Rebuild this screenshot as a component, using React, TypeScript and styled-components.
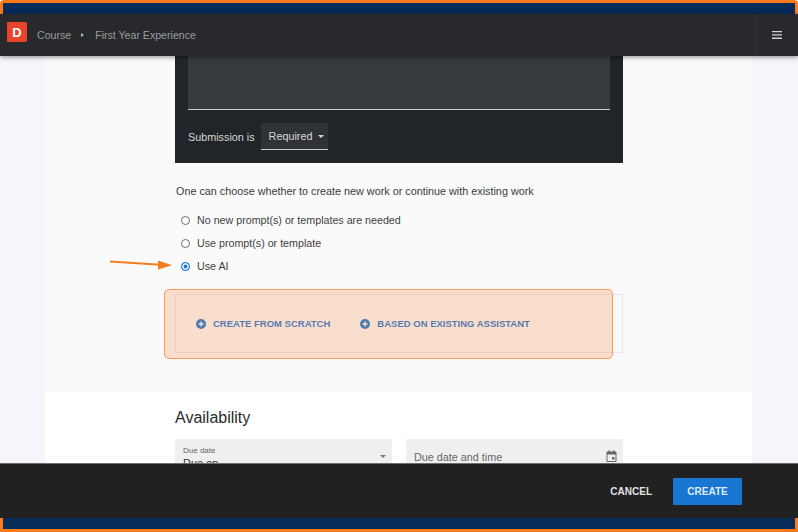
import React from "react";
import styled, { createGlobalStyle } from "styled-components";

const GlobalStyle = createGlobalStyle`
  html, body {
    margin: 0;
    padding: 0;
    height: 100%;
    overflow: hidden;
    background: #fff;
  }
  * { box-sizing: border-box; }
  body {
    font-family: "Liberation Sans", Arial, sans-serif;
  }
`;

const Page = styled.div`
  position: relative;
  width: 798px;
  height: 532px;
  display: flex;
  flex-direction: column;
  overflow: hidden;
`;

const TopBand = styled.div`
  height: 14px;
  flex: none;
  background: #072c5a;
  border: solid #ff7a1a;
  border-width: 3px 3px 0 3px;
  border-radius: 4px 4px 0 0;
`;

const BottomBand = styled.div`
  height: 14px;
  flex: none;
  background: #072c5a;
  border: solid #ff7a1a;
  border-width: 0 3px 3px 3px;
`;

const Header = styled.header`
  position: relative;
  z-index: 2;
  height: 42px;
  flex: none;
  display: flex;
  align-items: center;
  background: #27292c;
  box-shadow: 0 1px 5px rgba(0, 0, 0, 0.45);
  padding-left: 7px;
`;

const Logo = styled.div`
  width: 20px;
  height: 20px;
  margin-top: -6px;
  background: #e8442a;
  border-radius: 1px;
  display: flex;
  align-items: center;
  justify-content: center;
  color: #fff;
  font-size: 13px;
  font-weight: 700;
`;

const Crumb = styled.span`
  color: #9b9c9e;
  font-size: 10.6px;
  line-height: 14px;
`;

const CrumbCaret = styled.span`
  width: 0;
  height: 0;
  margin: 0 11px 0 10px;
  border-style: solid;
  border-width: 2.5px 0 2.5px 3px;
  border-color: transparent transparent transparent #b5b6b8;
`;

const Crumbs = styled.nav`
  display: flex;
  align-items: center;
  margin-left: 10px;
`;

const MenuCell = styled.div`
  margin-left: auto;
  width: 43px;
  height: 40px;
  border-left: 1px solid #313336;
  display: flex;
  align-items: center;
  justify-content: center;
  color: #d4d4d4;
`;

const Main = styled.main`
  flex: 1;
  min-height: 0;
  overflow: hidden;
  padding: 0 46px 0 45px;
  background: #f4f6fb;
`;

const Sheet = styled.div`
  background: #fff;
`;

const UpperSection = styled.section`
  height: 336px;
  padding-left: 130px;
  background: #fafafa;
`;

const Column = styled.div`
  width: 448px;
`;

const DarkPanel = styled.div`
  height: 107px;
  background: #212428;
  padding: 0 13px;
  color: #d6d7d8;
  font-size: 10.8px;
`;

const DarkTextArea = styled.div`
  height: 54px;
  background: #373a3c;
  border-bottom: 1px solid #c9caca;
`;

const SubmissionRow = styled.div`
  margin-top: 13px;
  display: flex;
  align-items: center;
  gap: 6px;
`;

const DarkSelect = styled.div`
  width: 67px;
  height: 27px;
  padding-left: 8px;
  background: #303336;
  border-bottom: 1px solid #c9caca;
  display: flex;
  align-items: center;
  gap: 6px;
`;

const Caret = styled.span<{ $color: string }>`
  width: 0;
  height: 0;
  border-style: solid;
  border-width: 3px 3px 0 3px;
  border-color: ${({ $color }) => $color} transparent transparent transparent;
`;

const Prompt = styled.p`
  margin: 21px 0 0 1px;
  font-size: 10.8px;
  line-height: 14px;
  color: #3a3a3a;
`;

const RadioList = styled.div`
  margin: 15px 0 0 6px;
  display: flex;
  flex-direction: column;
  gap: 9px;
`;

const RadioRow = styled.label`
  display: flex;
  align-items: center;
  gap: 7px;
  height: 14px;
  font-size: 10.7px;
  color: #3f3f3f;
`;

const RadioDot = styled.span<{ $checked?: boolean }>`
  width: 9px;
  height: 9px;
  border-radius: 50%;
  border: 1px solid ${({ $checked }) => ($checked ? "#1976d2" : "#6f6f6f")};
  background: ${({ $checked }) => ($checked ? "#1976d2" : "#fff")};
  box-shadow: ${({ $checked }) => ($checked ? "inset 0 0 0 1.5px #fff" : "none")};
`;

const ActionCard = styled.div`
  margin-top: 21px;
  height: 59px;
  border: 1px solid #e8e8e8;
  padding-left: 20px;
  display: flex;
  align-items: center;
  gap: 30px;
`;

const AddButton = styled.button`
  display: flex;
  align-items: center;
  gap: 7px;
  padding: 0;
  border: none;
  background: none;
  color: #1976d2;
  font: 700 9.5px "Liberation Sans", Arial, sans-serif;
  white-space: nowrap;
`;

const LowerSection = styled.section`
  padding: 16px 0 0 130px;
`;

const SectionTitle = styled.h2`
  margin: 0;
  font-size: 16px;
  font-weight: 400;
  line-height: 19px;
  color: #2b2b2b;
`;

const FieldRow = styled.div`
  margin-top: 12px;
  display: grid;
  grid-template-columns: 217px 217px;
  gap: 14px;
`;

const Field = styled.div`
  position: relative;
  height: 52px;
  padding: 6px 8px;
  background: #efefef;
  border-radius: 2px 2px 0 0;
`;

const FieldLabel = styled.div`
  font-size: 8px;
  line-height: 11px;
  color: #666;
`;

const FieldValue = styled.div`
  font-size: 11px;
  line-height: 14px;
  color: #333;
`;

const Placeholder = styled.div`
  margin-top: 5px;
  font-size: 10.8px;
  line-height: 14px;
  color: #666;
`;

const FieldEnd = styled.span`
  position: absolute;
  top: 10px;
  right: 6px;
  color: #666;
  display: flex;
  height: 14px;
  align-items: center;
`;

const Footer = styled.footer`
  position: relative;
  z-index: 2;
  height: 55px;
  flex: none;
  display: flex;
  align-items: center;
  justify-content: flex-end;
  gap: 21px;
  padding-right: 56px;
  background: #212121;
  border-top: 1px solid #6e6e6e;
`;

const CancelButton = styled.button`
  border: none;
  padding: 0;
  background: none;
  color: #e2e2e2;
  font: 700 10px "Liberation Sans", Arial, sans-serif;
`;

const CreateButton = styled.button`
  width: 69px;
  height: 27px;
  border: none;
  border-radius: 1px;
  background: #1976d2;
  color: #dfeaf6;
  font: 700 10px "Liberation Sans", Arial, sans-serif;
`;

const Highlight = styled.div`
  position: absolute;
  left: 164px;
  top: 289px;
  width: 449px;
  height: 70px;
  z-index: 1;
  border: 1.5px solid #fb9a58;
  border-radius: 5px;
  background: rgba(250, 140, 70, 0.25);
`;

const ArrowMark = styled.svg`
  position: absolute;
  left: 108px;
  top: 258px;
  z-index: 1;
`;

function PlusIcon() {
  return (
    <svg width="10" height="10" viewBox="0 0 11 11">
      <circle cx="5.5" cy="5.5" r="5.5" fill="#1976d2" />
      <path d="M5.5 2.800v5.400M2.800 5.500h5.400" stroke="#fff" strokeWidth="1.400" />
    </svg>
  );
}

function CalendarIcon() {
  return (
    <svg width="11" height="12" viewBox="0 0 11 12" fill="none">
      <path d="M1 2h9v9.5H1z" stroke="currentColor" strokeWidth="1" />
      <path d="M1 2h9v2.5H1zM2.500 .5h1.500V2H2.500zM7 .5h1.500V2H7z" fill="currentColor" />
      <path d="M6 7h2.500v2.500H6z" fill="currentColor" />
    </svg>
  );
}

export default function App() {
  return (
    <Page>
      <GlobalStyle />
      <TopBand />
      <Header>
        <Logo>D</Logo>
        <Crumbs>
          <Crumb>Course</Crumb>
          <CrumbCaret />
          <Crumb>First Year Experience</Crumb>
        </Crumbs>
        <MenuCell>
          <svg width="10" height="8" viewBox="0 0 10 8" fill="currentColor">
            <path d="M0 0h10v1.300H0zM0 3.300h10v1.300H0zM0 6.600h10v1.300H0z" />
          </svg>
        </MenuCell>
      </Header>
      <Main>
        <Sheet>
          <UpperSection>
            <Column>
              <DarkPanel>
                <DarkTextArea />
                <SubmissionRow>
                  Submission is
                  <DarkSelect>
                    Required
                    <Caret $color="#d6d7d8" />
                  </DarkSelect>
                </SubmissionRow>
              </DarkPanel>
              <Prompt>One can choose whether to create new work or continue with existing work</Prompt>
              <RadioList>
                <RadioRow>
                  <RadioDot />
                  No new prompt(s) or templates are needed
                </RadioRow>
                <RadioRow>
                  <RadioDot />
                  Use prompt(s) or template
                </RadioRow>
                <RadioRow>
                  <RadioDot $checked />
                  Use AI
                </RadioRow>
              </RadioList>
              <ActionCard>
                <AddButton>
                  <PlusIcon />
                  CREATE FROM SCRATCH
                </AddButton>
                <AddButton>
                  <PlusIcon />
                  BASED ON EXISTING ASSISTANT
                </AddButton>
              </ActionCard>
            </Column>
          </UpperSection>
          <LowerSection>
            <Column>
              <SectionTitle>Availability</SectionTitle>
              <FieldRow>
                <Field>
                  <FieldLabel>Due date</FieldLabel>
                  <FieldValue>Due on</FieldValue>
                  <FieldEnd>
                    <Caret $color="#777" />
                  </FieldEnd>
                </Field>
                <Field>
                  <Placeholder>Due date and time</Placeholder>
                  <FieldEnd>
                    <CalendarIcon />
                  </FieldEnd>
                </Field>
              </FieldRow>
            </Column>
          </LowerSection>
        </Sheet>
      </Main>
      <Footer>
        <CancelButton>CANCEL</CancelButton>
        <CreateButton>CREATE</CreateButton>
      </Footer>
      <BottomBand />
      <Highlight />
      <ArrowMark width="68" height="16" viewBox="0 0 68 16">
        <path d="M2 3.500 L56 7" stroke="#f57c22" strokeWidth="1.800" fill="none" />
        <path d="M50 2.500 L64 7.300 L50 11.500 Z" fill="#f57c22" />
      </ArrowMark>
    </Page>
  );
}
